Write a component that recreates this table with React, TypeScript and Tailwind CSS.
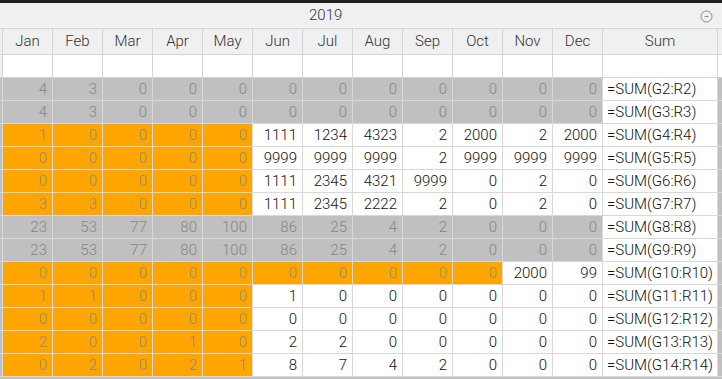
import React from 'react';

type Tone = 'g' | 'o' | 'w';

type Row = { vals: number[]; tones: Tone[] };

const months = ['Jan', 'Feb', 'Mar', 'Apr', 'May', 'Jun', 'Jul', 'Aug', 'Sep', 'Oct', 'Nov', 'Dec'];

const all = (t: Tone): Tone[] => Array(12).fill(t);
const split = (n: number): Tone[] => Array.from({ length: 12 }, (_, i) => (i < n ? 'o' : 'w'));

const rows: Row[] = [
  { vals: [4, 3, 0, 0, 0, 0, 0, 0, 0, 0, 0, 0], tones: all('g') },
  { vals: [4, 3, 0, 0, 0, 0, 0, 0, 0, 0, 0, 0], tones: all('g') },
  { vals: [1, 0, 0, 0, 0, 1111, 1234, 4323, 2, 2000, 2, 2000], tones: split(5) },
  { vals: [0, 0, 0, 0, 0, 9999, 9999, 9999, 2, 9999, 9999, 9999], tones: split(5) },
  { vals: [0, 0, 0, 0, 0, 1111, 2345, 4321, 9999, 0, 2, 0], tones: split(5) },
  { vals: [3, 3, 0, 0, 0, 1111, 2345, 2222, 2, 0, 2, 0], tones: split(5) },
  { vals: [23, 53, 77, 80, 100, 86, 25, 4, 2, 0, 0, 0], tones: all('g') },
  { vals: [23, 53, 77, 80, 100, 86, 25, 4, 2, 0, 0, 0], tones: all('g') },
  { vals: [0, 0, 0, 0, 0, 0, 0, 0, 0, 0, 2000, 99], tones: split(10) },
  { vals: [1, 1, 0, 0, 0, 1, 0, 0, 0, 0, 0, 0], tones: split(5) },
  { vals: [0, 0, 0, 0, 0, 0, 0, 0, 0, 0, 0, 0], tones: split(5) },
  { vals: [2, 0, 0, 1, 0, 2, 2, 0, 0, 0, 0, 0], tones: split(5) },
  { vals: [0, 2, 0, 2, 1, 8, 7, 4, 2, 0, 0, 0], tones: split(5) },
];

const toneClass: Record<Tone, string> = {
  g: 'bg-[#c0c0c0] text-[#858585]',
  o: 'bg-[#ffa500] text-[#8a8a8a]',
  w: 'bg-white text-[#111]',
};

const App: React.FC = () => {
  return (
    <div
      className="h-[379px] w-[722px] overflow-hidden bg-[#c0c0c0] text-[15px] font-light"
      style={{ fontFamily: 'Roboto, "Liberation Sans", sans-serif' }}
    >
      {/* Window edge */}
      <div className="h-[3px] bg-[#1e1e1e]" />

      {/* Year group header */}
      <div className="relative flex h-[26px] items-center border-b border-[#d4d4d4] bg-[#f0f0f0] text-[#333]">
        <span className="pl-[309px]">2019</span>
        <svg className="absolute left-[700px] top-[7px]" width="13" height="13" viewBox="0 0 13 13">
          <circle cx="6.5" cy="6.5" r="5.5" fill="none" stroke="#8a8a8a" strokeWidth="1" />
          <line x1="4.5" y1="6.5" x2="8.5" y2="6.5" stroke="#8a8a8a" strokeWidth="1" />
        </svg>
      </div>

      {/* Month header */}
      <div className="flex h-[26px] border-b border-[#d4d4d4] bg-[#f0f0f0] text-[#333]">
        <div className="w-[2px]" />
        {months.map((m) => (
          <div key={m} className="flex w-[50px] items-center justify-center border-l border-[#d4d4d4]">
            {m}
          </div>
        ))}
        <div className="flex w-[116px] items-center justify-center border-x border-[#d4d4d4]">Sum</div>
      </div>

      {/* Empty input row */}
      <div className="flex h-[23px] border-b border-[#d4d4d4] bg-white">
        <div className="w-[2px] bg-[#f0f0f0]" />
        {months.map((m) => (
          <div key={m} className="w-[50px] border-l border-[#d4d4d4]" />
        ))}
        <div className="w-[116px] border-x border-[#d4d4d4]" />
      </div>

      {/* Data rows */}
      {rows.map((r, ri) => (
        <div key={ri} className="flex h-[23px] border-b border-[#d8d8d8]">
          <div className="w-[2px]" />
          {r.vals.map((v, ci) => (
            <div
              key={ci}
              className={`flex w-[50px] items-center justify-end border-l border-[#d8d8d8] pr-[5px] ${toneClass[r.tones[ci]]}`}
            >
              {v}
            </div>
          ))}
          <div className="flex w-[116px] items-center border-x border-[#d8d8d8] bg-white pl-[4px] text-[#111]">
            =SUM(G{ri + 2}:R{ri + 2})
          </div>
        </div>
      ))}
    </div>
  );
};

export default App;
